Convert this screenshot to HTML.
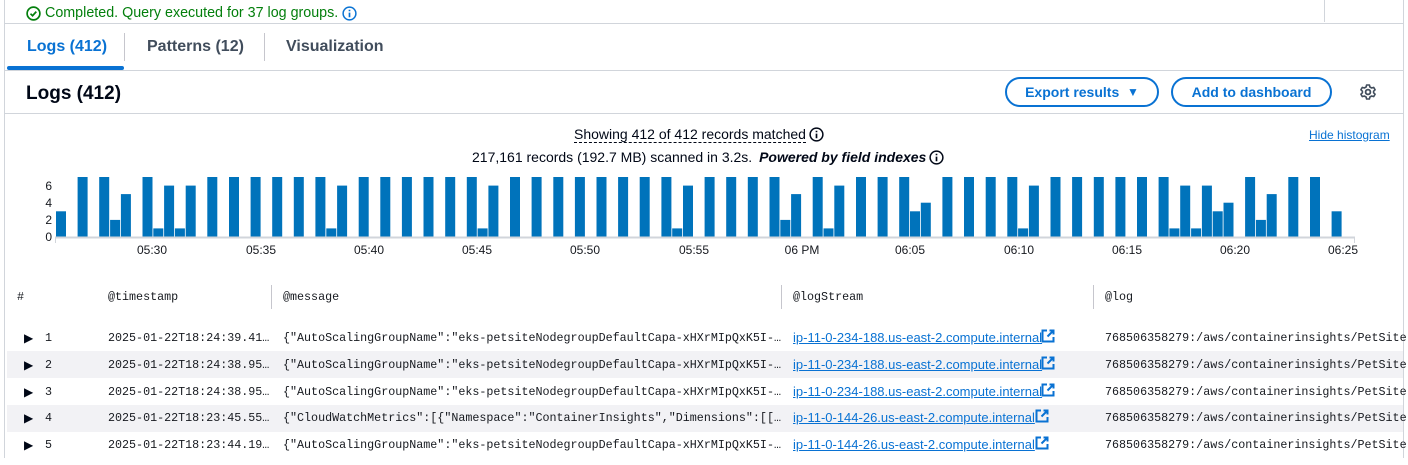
<!DOCTYPE html>
<html><head><meta charset="utf-8"><style>
*{margin:0;padding:0;box-sizing:border-box}
body{width:1408px;height:458px;background:#fff;font-family:"Liberation Sans",sans-serif;color:#000716;position:relative;overflow:hidden}
.abs{position:absolute}
.mono{font-family:"Liberation Mono",monospace;font-size:11.7px;color:#16191f;white-space:nowrap}
.tab{position:absolute;top:38px;font-size:16px;font-weight:bold;color:#414d5c}
.btn{position:absolute;top:77px;height:30px;border:2px solid #0972d3;border-radius:16px;color:#0972d3;font-weight:bold;font-size:14px;display:flex;align-items:center;justify-content:center}
.row{position:absolute;left:7px;width:1396px;height:27px}
.link{color:#0972d3;text-decoration:underline;font-size:13px}
</style></head><body>
<div class="abs" style="left:4px;top:0;width:1px;height:458px;background:#d1d5db"></div>
<div class="abs" style="left:1403px;top:0;width:1px;height:458px;background:#d1d5db"></div>
<div class="abs" style="left:1324px;top:0;width:1px;height:22px;background:#d1d5db"></div>
<div class="abs" style="left:26px;top:5px;font-size:14.3px;color:#037f0c;display:flex;align-items:center;gap:4px">
<svg width="15" height="15" viewBox="0 0 16 16"><circle cx="8" cy="8" r="6.8" fill="none" stroke="#037f0c" stroke-width="1.8"/><path d="M4.8 8.2l2.2 2.2 4-4.4" fill="none" stroke="#037f0c" stroke-width="1.8"/></svg>
Completed. Query executed for 37 log groups.
<svg width="15" height="15" viewBox="0 0 16 16"><circle cx="8" cy="8" r="6.8" fill="none" stroke="#0972d3" stroke-width="1.6"/><path d="M8 7v5M8 4v1.6" stroke="#0972d3" stroke-width="1.8"/></svg></div>
<div class="abs" style="left:4px;top:23px;width:1400px;height:1px;background:#d1d5db"></div>
<div class="tab" style="left:27px;color:#0972d3">Logs (412)</div>
<div class="abs" style="left:124px;top:33px;width:1px;height:28px;background:#c6c6cd"></div>
<div class="tab" style="left:147px">Patterns (12)</div>
<div class="abs" style="left:264px;top:33px;width:1px;height:28px;background:#c6c6cd"></div>
<div class="tab" style="left:286px">Visualization</div>
<div class="abs" style="left:7px;top:66px;width:117px;height:4px;background:#0972d3;border-radius:2px"></div>
<div class="abs" style="left:4px;top:70px;width:1400px;height:1px;background:#d1d5db"></div>
<div class="abs" style="left:26px;top:83px;font-size:19px;font-weight:bold">Logs (412)</div>
<div class="btn" style="left:1005px;width:154px">Export results&nbsp;&nbsp;<span style="font-size:12px">▼</span></div>
<div class="btn" style="left:1171px;width:161px">Add to dashboard</div>
<svg class="abs" style="left:1359px;top:83px" width="18" height="18" viewBox="0 0 18 18"><circle cx="9" cy="9" r="2.4" fill="none" stroke="#414d5c" stroke-width="1.8"/><path d="M7.6 2h2.8l.5 2 1.8 1 2-.6 1.4 2.4-1.5 1.4v1.6l1.5 1.4-1.4 2.4-2-.6-1.8 1-.5 2H7.6l-.5-2-1.8-1-2 .6-1.4-2.4 1.5-1.4V8.2L1.9 6.8l1.4-2.4 2 .6 1.8-1z" fill="none" stroke="#414d5c" stroke-width="1.6" stroke-linejoin="round"/></svg>
<div class="abs" style="left:4px;top:113px;width:1400px;height:1px;background:#d1d5db"></div>
<div class="abs" style="left:574px;top:126px;font-size:14px;display:flex;align-items:center;gap:3px"><span style="border-bottom:1px dashed #000716">Showing 412 of 412 records matched</span>
<svg width="15" height="15" viewBox="0 0 16 16"><circle cx="8" cy="8" r="6.8" fill="none" stroke="#000716" stroke-width="1.6"/><path d="M8 7v5M8 4v1.6" stroke="#000716" stroke-width="1.8"/></svg></div>
<div class="abs" style="left:472px;top:149px;font-size:14px;display:flex;align-items:center;gap:3px">217,161 records (192.7 MB) scanned in 3.2s.&nbsp;<b><i>Powered by field indexes</i></b>
<svg width="15" height="15" viewBox="0 0 16 16"><circle cx="8" cy="8" r="6.8" fill="none" stroke="#000716" stroke-width="1.6"/><path d="M8 7v5M8 4v1.6" stroke="#000716" stroke-width="1.8"/></svg></div>
<div class="abs link" style="left:1309px;top:128px;font-size:12px">Hide histogram</div>
<svg class="abs" style="left:0;top:170px" width="1408" height="95" viewBox="0 170 1408 95" font-family="Liberation Sans, sans-serif" font-size="12" fill="#16191f">
<g fill="#0073bb">
<rect x="56" y="211.3" width="10" height="25.7"/><rect x="77.6" y="177" width="10" height="60"/><rect x="99.2" y="177" width="10" height="60"/><rect x="110.1" y="219.9" width="10" height="17.1"/><rect x="120.9" y="194.1" width="10" height="42.9"/><rect x="142.5" y="177" width="10" height="60"/><rect x="153.3" y="228.4" width="10" height="8.6"/><rect x="164.1" y="185.6" width="10" height="51.4"/><rect x="174.9" y="228.4" width="10" height="8.6"/><rect x="185.7" y="185.6" width="10" height="51.4"/><rect x="207.3" y="177" width="10" height="60"/><rect x="229" y="177" width="10" height="60"/><rect x="250.6" y="177" width="10" height="60"/><rect x="272.2" y="177" width="10" height="60"/><rect x="293.8" y="177" width="10" height="60"/><rect x="315.4" y="177" width="10" height="60"/><rect x="326.3" y="228.4" width="10" height="8.6"/><rect x="337.1" y="185.6" width="10" height="51.4"/><rect x="358.7" y="177" width="10" height="60"/><rect x="380.3" y="177" width="10" height="60"/><rect x="401.9" y="177" width="10" height="60"/><rect x="423.5" y="177" width="10" height="60"/><rect x="445.2" y="177" width="10" height="60"/><rect x="466.8" y="177" width="10" height="60"/><rect x="477.6" y="228.4" width="10" height="8.6"/><rect x="488.4" y="185.6" width="10" height="51.4"/><rect x="510" y="177" width="10" height="60"/><rect x="531.6" y="177" width="10" height="60"/><rect x="553.3" y="177" width="10" height="60"/><rect x="574.9" y="177" width="10" height="60"/><rect x="596.5" y="177" width="10" height="60"/><rect x="618.1" y="177" width="10" height="60"/><rect x="639.7" y="177" width="10" height="60"/><rect x="661.4" y="177" width="10" height="60"/><rect x="672.2" y="228.4" width="10" height="8.6"/><rect x="683" y="185.6" width="10" height="51.4"/><rect x="704.6" y="177" width="10" height="60"/><rect x="726.2" y="177" width="10" height="60"/><rect x="747.8" y="177" width="10" height="60"/><rect x="769.5" y="177" width="10" height="60"/><rect x="780.3" y="219.9" width="10" height="17.1"/><rect x="791.1" y="194.1" width="10" height="42.9"/><rect x="812.7" y="177" width="10" height="60"/><rect x="823.5" y="228.4" width="10" height="8.6"/><rect x="834.3" y="185.6" width="10" height="51.4"/><rect x="856" y="177" width="10" height="60"/><rect x="877.6" y="177" width="10" height="60"/><rect x="899.2" y="177" width="10" height="60"/><rect x="910" y="211.3" width="10" height="25.7"/><rect x="920.8" y="202.7" width="10" height="34.3"/><rect x="942.4" y="177" width="10" height="60"/><rect x="964" y="177" width="10" height="60"/><rect x="985.7" y="177" width="10" height="60"/><rect x="1007.3" y="177" width="10" height="60"/><rect x="1018.1" y="228.4" width="10" height="8.6"/><rect x="1028.9" y="185.6" width="10" height="51.4"/><rect x="1050.5" y="177" width="10" height="60"/><rect x="1072.1" y="177" width="10" height="60"/><rect x="1093.8" y="177" width="10" height="60"/><rect x="1115.4" y="177" width="10" height="60"/><rect x="1137" y="177" width="10" height="60"/><rect x="1158.6" y="177" width="10" height="60"/><rect x="1169.4" y="228.4" width="10" height="8.6"/><rect x="1180.2" y="185.6" width="10" height="51.4"/><rect x="1191.1" y="228.4" width="10" height="8.6"/><rect x="1201.9" y="185.6" width="10" height="51.4"/><rect x="1212.7" y="211.3" width="10" height="25.7"/><rect x="1223.5" y="202.7" width="10" height="34.3"/><rect x="1245.1" y="177" width="10" height="60"/><rect x="1255.9" y="219.9" width="10" height="17.1"/><rect x="1266.7" y="194.1" width="10" height="42.9"/><rect x="1288.3" y="177" width="10" height="60"/><rect x="1310" y="177" width="10" height="60"/><rect x="1331.6" y="211.3" width="10" height="25.7"/>
</g>
<line x1="55" y1="237.5" x2="1355" y2="237.5" stroke="#d1d5db" stroke-width="2"/>
<line x1="55.5" y1="237" x2="55.5" y2="243" stroke="#d1d5db"/><line x1="1354.5" y1="237" x2="1354.5" y2="243" stroke="#d1d5db"/>
<g text-anchor="end"><text x="52" y="190">6</text><text x="52" y="207">4</text><text x="52" y="224">2</text><text x="52" y="241">0</text></g>
<g text-anchor="middle"><text x="152" y="254">05:30</text><text x="261" y="254">05:35</text><text x="369" y="254">05:40</text><text x="477" y="254">05:45</text><text x="585" y="254">05:50</text><text x="694" y="254">05:55</text><text x="802" y="254">06 PM</text><text x="910" y="254">06:05</text><text x="1019" y="254">06:10</text><text x="1127" y="254">06:15</text><text x="1235" y="254">06:20</text><text x="1343" y="254">06:25</text></g>
</svg>
<div class="mono abs" style="left:17px;top:290px">#</div>
<div class="mono abs" style="left:108px;top:290px">@timestamp</div>
<div class="mono abs" style="left:283px;top:290px">@message</div>
<div class="mono abs" style="left:793px;top:290px">@logStream</div>
<div class="mono abs" style="left:1105px;top:290px">@log</div>
<div class="abs" style="left:271px;top:285px;width:1px;height:24px;background:#c6c6cd"></div>
<div class="abs" style="left:781px;top:285px;width:1px;height:24px;background:#c6c6cd"></div>
<div class="abs" style="left:1093px;top:285px;width:1px;height:24px;background:#c6c6cd"></div>

<div class="row" style="top:351px;background:#f2f2f5"></div>
<div class="row" style="top:405px;background:#f2f2f5"></div>

<div class="abs" style="left:0;top:331px;width:1408px">
<div style="height:26.8px;position:relative"><span class="abs" style="left:24px;top:0;font-size:12px">▶</span><span class="mono abs" style="left:45px;top:0">1</span><span class="mono abs" style="left:108px;top:0">2025-01-22T18:24:39.41…</span><span class="mono abs" style="left:283px;top:0">{"AutoScalingGroupName":"eks-petsiteNodegroupDefaultCapa-xHXrMIpQxK5I-…</span><span class="link abs" style="left:793px;top:-1px">ip-11-0-234-188.us-east-2.compute.internal</span><svg class="abs" style="left:1041px;top:-2px" width="14" height="14" viewBox="0 0 14 14"><path d="M6 1.5H1.5v11h11V8M8.5 1.5h4v4M12.5 1.5 6.5 7.5" fill="none" stroke="#0972d3" stroke-width="2"/></svg><span class="mono abs" style="left:1105px;top:0">768506358279:/aws/containerinsights/PetSite</span></div>
<div style="height:26.8px;position:relative"><span class="abs" style="left:24px;top:0;font-size:12px">▶</span><span class="mono abs" style="left:45px;top:0">2</span><span class="mono abs" style="left:108px;top:0">2025-01-22T18:24:38.95…</span><span class="mono abs" style="left:283px;top:0">{"AutoScalingGroupName":"eks-petsiteNodegroupDefaultCapa-xHXrMIpQxK5I-…</span><span class="link abs" style="left:793px;top:-1px">ip-11-0-234-188.us-east-2.compute.internal</span><svg class="abs" style="left:1041px;top:-2px" width="14" height="14" viewBox="0 0 14 14"><path d="M6 1.5H1.5v11h11V8M8.5 1.5h4v4M12.5 1.5 6.5 7.5" fill="none" stroke="#0972d3" stroke-width="2"/></svg><span class="mono abs" style="left:1105px;top:0">768506358279:/aws/containerinsights/PetSite</span></div>
<div style="height:26.8px;position:relative"><span class="abs" style="left:24px;top:0;font-size:12px">▶</span><span class="mono abs" style="left:45px;top:0">3</span><span class="mono abs" style="left:108px;top:0">2025-01-22T18:24:38.95…</span><span class="mono abs" style="left:283px;top:0">{"AutoScalingGroupName":"eks-petsiteNodegroupDefaultCapa-xHXrMIpQxK5I-…</span><span class="link abs" style="left:793px;top:-1px">ip-11-0-234-188.us-east-2.compute.internal</span><svg class="abs" style="left:1041px;top:-2px" width="14" height="14" viewBox="0 0 14 14"><path d="M6 1.5H1.5v11h11V8M8.5 1.5h4v4M12.5 1.5 6.5 7.5" fill="none" stroke="#0972d3" stroke-width="2"/></svg><span class="mono abs" style="left:1105px;top:0">768506358279:/aws/containerinsights/PetSite</span></div>
<div style="height:26.8px;position:relative"><span class="abs" style="left:24px;top:0;font-size:12px">▶</span><span class="mono abs" style="left:45px;top:0">4</span><span class="mono abs" style="left:108px;top:0">2025-01-22T18:23:45.55…</span><span class="mono abs" style="left:283px;top:0">{"CloudWatchMetrics":[{"Namespace":"ContainerInsights","Dimensions":[[…</span><span class="link abs" style="left:793px;top:-1px">ip-11-0-144-26.us-east-2.compute.internal</span><svg class="abs" style="left:1035px;top:-2px" width="14" height="14" viewBox="0 0 14 14"><path d="M6 1.5H1.5v11h11V8M8.5 1.5h4v4M12.5 1.5 6.5 7.5" fill="none" stroke="#0972d3" stroke-width="2"/></svg><span class="mono abs" style="left:1105px;top:0">768506358279:/aws/containerinsights/PetSite</span></div>
<div style="height:26.8px;position:relative"><span class="abs" style="left:24px;top:0;font-size:12px">▶</span><span class="mono abs" style="left:45px;top:0">5</span><span class="mono abs" style="left:108px;top:0">2025-01-22T18:23:44.19…</span><span class="mono abs" style="left:283px;top:0">{"AutoScalingGroupName":"eks-petsiteNodegroupDefaultCapa-xHXrMIpQxK5I-…</span><span class="link abs" style="left:793px;top:-1px">ip-11-0-144-26.us-east-2.compute.internal</span><svg class="abs" style="left:1035px;top:-2px" width="14" height="14" viewBox="0 0 14 14"><path d="M6 1.5H1.5v11h11V8M8.5 1.5h4v4M12.5 1.5 6.5 7.5" fill="none" stroke="#0972d3" stroke-width="2"/></svg><span class="mono abs" style="left:1105px;top:0">768506358279:/aws/containerinsights/PetSite</span></div>
</div>
</body></html>
